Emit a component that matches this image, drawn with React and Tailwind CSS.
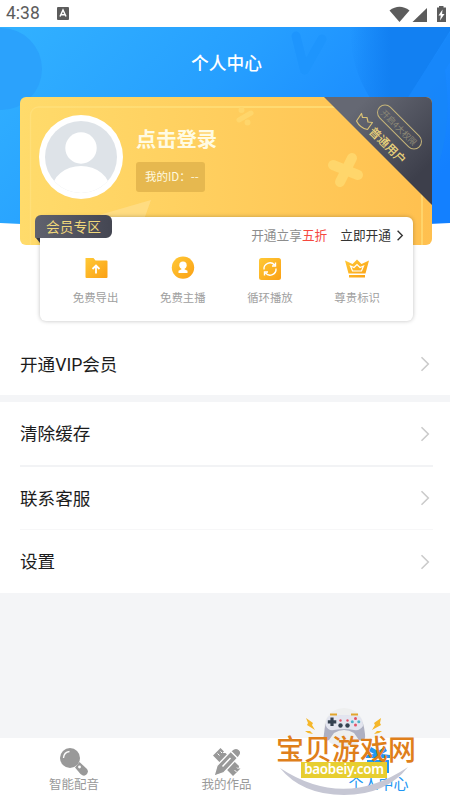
import React from "react";

const Chevron = ({ className, weight = 1.5 }) => (
    <svg viewBox="0 0 10 16" fill="none" stroke="currentColor" className={className}>
        <path d="M1.5 1.2 8.3 8 1.5 14.8" strokeWidth={weight} />
    </svg>
);

const StatusBar = () => (
    <div className="flex h-[27px] items-center bg-white pl-[6px] text-[#5c5c5c]">
        <span className="w-[51px] font-[Roboto] text-[17.5px] leading-none">4:38</span>
        <svg className="h-[13px] w-[12px]" viewBox="0 0 12 13">
            <rect width="12" height="13" rx="1" fill="#5c5c5c" />
            <path d="M3 9.5 6 3l3 6.5M4 7.8h4" stroke="#fff" strokeWidth="1.5" fill="none" />
        </svg>
        <svg className="ml-auto mr-[4px] h-[18px] w-[58px]" viewBox="388 3 58 18" fill="#5c5c5c">
            <path d="M389.500 8.500Q399.500 1 409.500 8.500L399.500 20Z" />
            <path d="M427 6v14h-14.500Z" />
            <path d="M439 4h4.500v1.500H446v14.500H437V5.500h2z" />
            <path d="m442.500 7.500-4 6h2.300L440 18.500l4.500-6.500h-2.400z" fill="#fff" />
        </svg>
    </div>
);

const HeaderBackground = () => (
    <svg className="absolute left-0 top-0 h-[202px] w-[450px]" viewBox="0 27 450 202">
        <defs>
            <linearGradient id="sky" gradientUnits="userSpaceOnUse" x1="20" y1="27" x2="330" y2="300">
                <stop offset="0" stopColor="#31b0ff" />
                <stop offset="0.45" stopColor="#269fff" />
                <stop offset="1" stopColor="#1380ff" />
            </linearGradient>
            <linearGradient id="shade" x1="0" x2="1">
                <stop offset="0" stopColor="#1280f2" stopOpacity="0" />
                <stop offset="0.4" stopColor="#1280f2" />
            </linearGradient>
            <clipPath id="headerClip">
                <path d="M0 27H450V223Q225 235 0 223Z" />
            </clipPath>
        </defs>
        <g clipPath="url(#headerClip)">
            <path d="M0 27h450v210H0z" fill="url(#sky)" />
            <circle cx="1" cy="69" r="41" fill="#2ba2fc" />
            <path d="M350 27h100v4L408 98h-38Q350 66 350 27Z" fill="url(#shade)" />
            <path d="M450 32 408 97V160H440Q452 120 445 70L450 62Z" fill="#1786f8" opacity=".7" />
            <path d="M296 36 304.500 70 322 39" fill="none" stroke="#1e95fd" strokeWidth="9" strokeLinecap="round" strokeLinejoin="round" />
        </g>
    </svg>
);

const CardBackground = () => (
    <svg className="absolute left-0 top-0 h-[148px] w-[412px]" viewBox="20 97 412 148">
        <defs>
            <linearGradient id="night" x1="0" y1="0" x2="1" y2="1">
                <stop offset="0.2" stopColor="#656873" />
                <stop offset="0.8" stopColor="#3d3f4b" />
            </linearGradient>
        </defs>
        <rect x="30.500" y="107" width="391.500" height="160" rx="8" fill="none" stroke="#ffdf79" strokeWidth="1.300" />
        <path d="M75 222 151 200 142 225Z" fill="#ffe08e" opacity=".7" />
        <g stroke="#ffd66b" strokeWidth="10" strokeLinecap="round">
            <path d="M333 165 358 175M352 158 340 182" />
            <path d="M239 120 251 113" strokeWidth="5" />
            <path d="M241.500 110v.1M247.500 122.500v.1" strokeWidth="6" />
        </g>
        <path d="M324 97H432V205Z" fill="url(#night)" />
        <path
            d="M361.500 113.500 362.500 117.500 367 117.500 368 122 372.500 122.500 367.500 129.500Q360 128 356.500 121Z"
            fill="none"
            stroke="#d9c276"
            strokeWidth="1.200"
            strokeLinejoin="round"
        />
    </svg>
);

const ProfileCard = () => (
    <section className="relative mx-[20px] h-[148px] w-[412px] overflow-hidden rounded-[6px] bg-linear-to-r from-[#ffdb6b] to-[#ffc04f]">
        <CardBackground />
        <div className="relative flex pl-[19px] pt-[18px]">
            <svg className="size-[84px]" viewBox="0 0 84 84">
                <defs>
                    <clipPath id="face"><circle cx="42" cy="42" r="36" /></clipPath>
                </defs>
                <circle cx="42" cy="42" r="42" fill="#fff" />
                <circle cx="42" cy="42" r="36" fill="#dee3e8" />
                <g fill="#fff" clipPath="url(#face)">
                    <circle cx="42" cy="33" r="15.700" />
                    <ellipse cx="42" cy="75" rx="29" ry="24" />
                </g>
            </svg>
            <div className="ml-[13px] pt-[10px]">
                <h2 className="text-[20.3px] font-bold leading-[27px] text-[#fffbe3]">点击登录</h2>
                <p className="mt-[10px] flex h-[30px] w-[69px] items-center whitespace-nowrap rounded-[3px] bg-[#e6b84f] pl-[9px] text-[11.5px] text-[#fff8df]">我的ID：--</p>
            </div>
        </div>
        <div className="absolute left-[351px] top-[21.5px] flex h-[16px] w-[57px] rotate-45 items-center justify-center rounded-full border border-[#c5b47a] text-[8.4px] leading-none text-[#8c8876]">
            <span className="whitespace-nowrap">开启4大权限</span>
        </div>
        <span className="absolute left-[344.5px] top-[40.5px] rotate-45 whitespace-nowrap text-[11.6px] font-medium leading-[14px] text-[#ecd47b]">普通用户</span>
    </section>
);

const FolderIcon = () => (
    <svg className="size-[24px]" viewBox="0 0 24 24">
        <path d="M1.500 2h8l2 2.500h11q1 0 1 1V21q0 1-1 1h-20q-1 0-1-1Z" fill="url(#gold)" />
        <path d="M12 17.500V10M8.500 13 12 9.500l3.500 3.500" fill="none" stroke="#fff" strokeWidth="1.800" />
    </svg>
);

const AnchorIcon = () => (
    <svg className="size-[24px]" viewBox="0 0 24 24">
        <circle cx="12" cy="11.600" r="11.200" fill="url(#gold)" />
        <circle cx="12" cy="9.300" r="3.700" fill="#fff" />
        <path d="M10.500 10h3v3.300l3 1.500v2.200h-9v-2.200l3-1.500Z" fill="#fff" />
    </svg>
);

const LoopIcon = () => (
    <svg className="size-[24px]" viewBox="0 0 24 24">
        <rect x="1" y="2" width="22" height="22" rx="2.500" fill="url(#gold)" />
        <path d="M6 13.500a6 6 0 0 1 10.500-4.500M18 12.500a6 6 0 0 1-10.500 4.500M17.500 6.500V10H14M6.500 19.500V16H10" fill="none" stroke="#fff" strokeWidth="1.400" />
    </svg>
);

const CrownIcon = () => (
    <svg className="size-[24px]" viewBox="0 0 24 24">
        <path d="M0 4.500 7.500 8 12 3.500 16.500 8 24 4.500 20.500 17.500h-17ZM4 19h16v2.500H4z" fill="url(#gold)" />
        <path d="m5.500 10 3.500 1.500 3-3 3 3 3.500-1.500-2 5h-9Z" fill="none" stroke="#fff" strokeWidth="1.200" />
    </svg>
);

const perks = [
    { label: "免费导出", Icon: FolderIcon },
    { label: "免费主播", Icon: AnchorIcon },
    { label: "循环播放", Icon: LoopIcon },
    { label: "尊贵标识", Icon: CrownIcon },
];

const MemberPanel = () => (
    <section className="relative -mt-[28px] ml-[40px] h-[104px] w-[373px] rounded-[6px] bg-white shadow-[0_0_4px_rgba(0,0,0,0.25)]">
        <svg className="absolute size-0">
            <defs>
                <linearGradient id="gold" x1="0" y1="0" x2="1" y2="1">
                    <stop offset="0" stopColor="#ffc936" />
                    <stop offset="1" stopColor="#fba014" />
                </linearGradient>
            </defs>
        </svg>
        <svg className="absolute -left-[5px] top-[17px] h-[9px] w-[5px]" viewBox="0 0 5 9">
            <path d="M0 0h5v9L1 4Z" fill="#353642" />
        </svg>
        <div className="absolute -left-[5px] -top-[2px] flex h-[23px] w-[77px] items-center justify-center rounded-[6px] rounded-bl-[1px] bg-linear-to-r from-[#60626e] to-[#444652] text-[13.7px] text-[#f0d77a]">会员专区</div>
        <div className="flex h-[36px] items-center justify-end pr-[9px] text-[12.7px]">
            <span className="text-[#8d8d8d]">开通立享</span>
            <span className="text-[#f5483f]">五折</span>
            <span className="ml-[13px] text-[#333]">立即开通</span>
            <Chevron className="ml-[5px] h-[11px] w-[8px] text-[#333]" weight={2} />
        </div>
        <ul className="flex pl-[12px]">
            {perks.map(({ label, Icon }) => (
                <li key={label} className="flex w-[87.2px] flex-col items-center">
                    <div className="mt-[3px]"><Icon /></div>
                    <span className="mt-[9px] text-[11.4px] leading-[17px] text-[#a0a0a0]">{label}</span>
                </li>
            ))}
        </ul>
    </section>
);

const Row = ({ label, className }) => (
    <div className={`flex items-center justify-between px-[20px] ${className}`}>
        <span className="pt-[2px] font-[Roboto,'Noto_Sans_CJK_SC',sans-serif] text-[17.6px] text-[#1c1c1c]">{label}</span>
        <Chevron className="h-[16px] w-[10px] text-[#cbcbcb]" weight={1.6} />
    </div>
);

const TabBar = () => (
    <nav className="flex h-[62px] bg-white text-[12.5px] text-[#999]">
        <div className="flex w-[148px] flex-col items-center pt-[10px]">
            <svg className="size-[28px]" viewBox="0 0 28 28" fill="#999">
                <circle cx="10" cy="10" r="10" />
                <path d="M3.500 10Q4 4 9.500 3.500" fill="none" stroke="#fff" strokeWidth="1.300" />
                <path d="m15 19.500 4.500-5.500 7.500 7q2 3-.5 5.500T20.500 26Z" />
                <circle cx="19.500" cy="19" r="1.400" fill="#fff" />
            </svg>
            <span className="leading-[16px]">智能配音</span>
        </div>
        <div className="flex w-[157px] flex-col items-center pt-[10px]">
            <svg className="size-[28px]" viewBox="0 0 28 28" fill="#999">
                <path d="m0 7.500 7.500-7.500 3.500 3.500-1.500 1.500 3 0 13.500 13-.5 2.500 2 0-7.500 7.500Z" />
                <path d="m4.500 5.500 2 2M7.500 3.500l1.500 1.500M21.500 22l2 2M24 19.500l1.500 1.500" stroke="#fff" strokeWidth="1" />
                <path d="M1 28 4 17.500 18.500 2.500q4-4 7.500-1t0 7L11 24.500Z" stroke="#fff" strokeWidth="1.300" />
                <path d="m9.500 18.500 8-8.500M18 3.500l6.500 6.500" stroke="#fff" strokeWidth="1.500" />
            </svg>
            <span className="leading-[16px]">我的作品</span>
        </div>
        <div className="flex w-[145px] flex-col items-center pt-[8px] text-[#2196f3]">
            <svg className="h-[29px] w-[28px]" viewBox="0 0 28 29" fill="#2196f3">
                <path d="M3 14h22v13H3zM14 5l7-4 2 4-5 3 8 1v3H2V9l8-1-5-3 2-4Z" />
            </svg>
            <span className="w-[64px] pl-[2px] text-center text-[15px] leading-[16px]">个人中心</span>
        </div>
    </nav>
);

const Watermark = () => (
    <div className="absolute left-[272px] top-[705px] h-[95px] w-[150px]">
        <svg className="absolute left-0 top-0 h-[95px] w-[150px]" viewBox="272 705 150 95">
            <circle cx="344" cy="728" r="20" fill="#eeefef" />
            <path d="M280 768Q344 810 408 767Q386 795 344 795Q302 795 280 768Z" fill="#c6c7d4" />
            <path d="M329 717Q344 714 359 717Q364 722 365 734Q366 743 359 740L354 733Q344 727 334 733L329 740Q322 743 324 734Q325 722 329 717Z" fill="#aeb0c2" />
            <path d="M329 716Q344 714 359 716Q363 719 363 726Q360 731 354 730Q344 728 334 730Q328 731 326 726Q325 719 329 716Z" fill="#e3e5ef" />
            <path d="M330 714.500h7M351 714.500h7" stroke="#e2a52c" strokeWidth="2" />
            <path d="M332 717.500v8.500M327.800 721.800h8.500" stroke="#344150" strokeWidth="3.200" />
            <g fill="#344150"><circle cx="340.500" cy="725.500" r="2.200" /><circle cx="347.500" cy="725.500" r="2.200" /></g>
            <g fill="#e35268">
                <circle cx="355.500" cy="718.500" r="1.500" /><circle cx="355.500" cy="725" r="1.500" />
                <circle cx="340.500" cy="720.500" r="1.200" /><circle cx="347.500" cy="720.500" r="1.200" />
            </g>
            <g fill="#4db2ca"><circle cx="352.300" cy="721.800" r="1.500" /><circle cx="358.800" cy="721.800" r="1.500" /></g>
            <path
                d="m306 718 7 5-1 2 3 5-8-5 1-2ZM381 718l-7 5 1 2-3 5 9-5-1-2ZM305 731l5 0 3 3-5-1ZM382 731l-5 0-3 3 5-1Z"
                fill="#f5b72b"
            />
        </svg>
        <span className="absolute left-[4px] top-[25px] whitespace-nowrap text-[28px] font-medium leading-[36px] text-[#df7f1b]">宝贝游戏网</span>
        <div className="absolute left-[29px] top-[57px] flex h-[16px] w-[86px] items-center justify-center bg-[#e7ce30] font-['Noto_Sans'] text-[13.4px] font-semibold leading-none tracking-[-0.3px] text-white">baobeiy.com</div>
    </div>
);

const App = () => {
    return (
        <div className="relative h-[800px] w-[450px] overflow-hidden bg-[#f4f5f7] font-['Noto_Sans_CJK_SC',sans-serif]">
            <StatusBar />
            <header className="relative h-[306px] bg-white">
                <HeaderBackground />
                <h1 className="relative flex h-[70px] items-center justify-center pl-[3px] text-[17.7px] font-medium text-white">个人中心</h1>
                <ProfileCard />
                <MemberPanel />
            </header>
            <Row label="开通VIP会员" className="h-[62px] bg-white" />
            <div className="mt-[7px] bg-white">
                <Row label="清除缓存" className="h-[63px]" />
                <div className="ml-[20px] mr-[17px] h-[2px] bg-[#f2f3f5]" />
                <Row label="联系客服" className="h-[62px]" />
                <div className="ml-[20px] mr-[17px] h-px bg-[#f7f7f8]" />
                <Row label="设置" className="h-[63px]" />
            </div>
            <div className="h-[145px]" />
            <TabBar />
            <Watermark />
        </div>
    );
};

export default App;
